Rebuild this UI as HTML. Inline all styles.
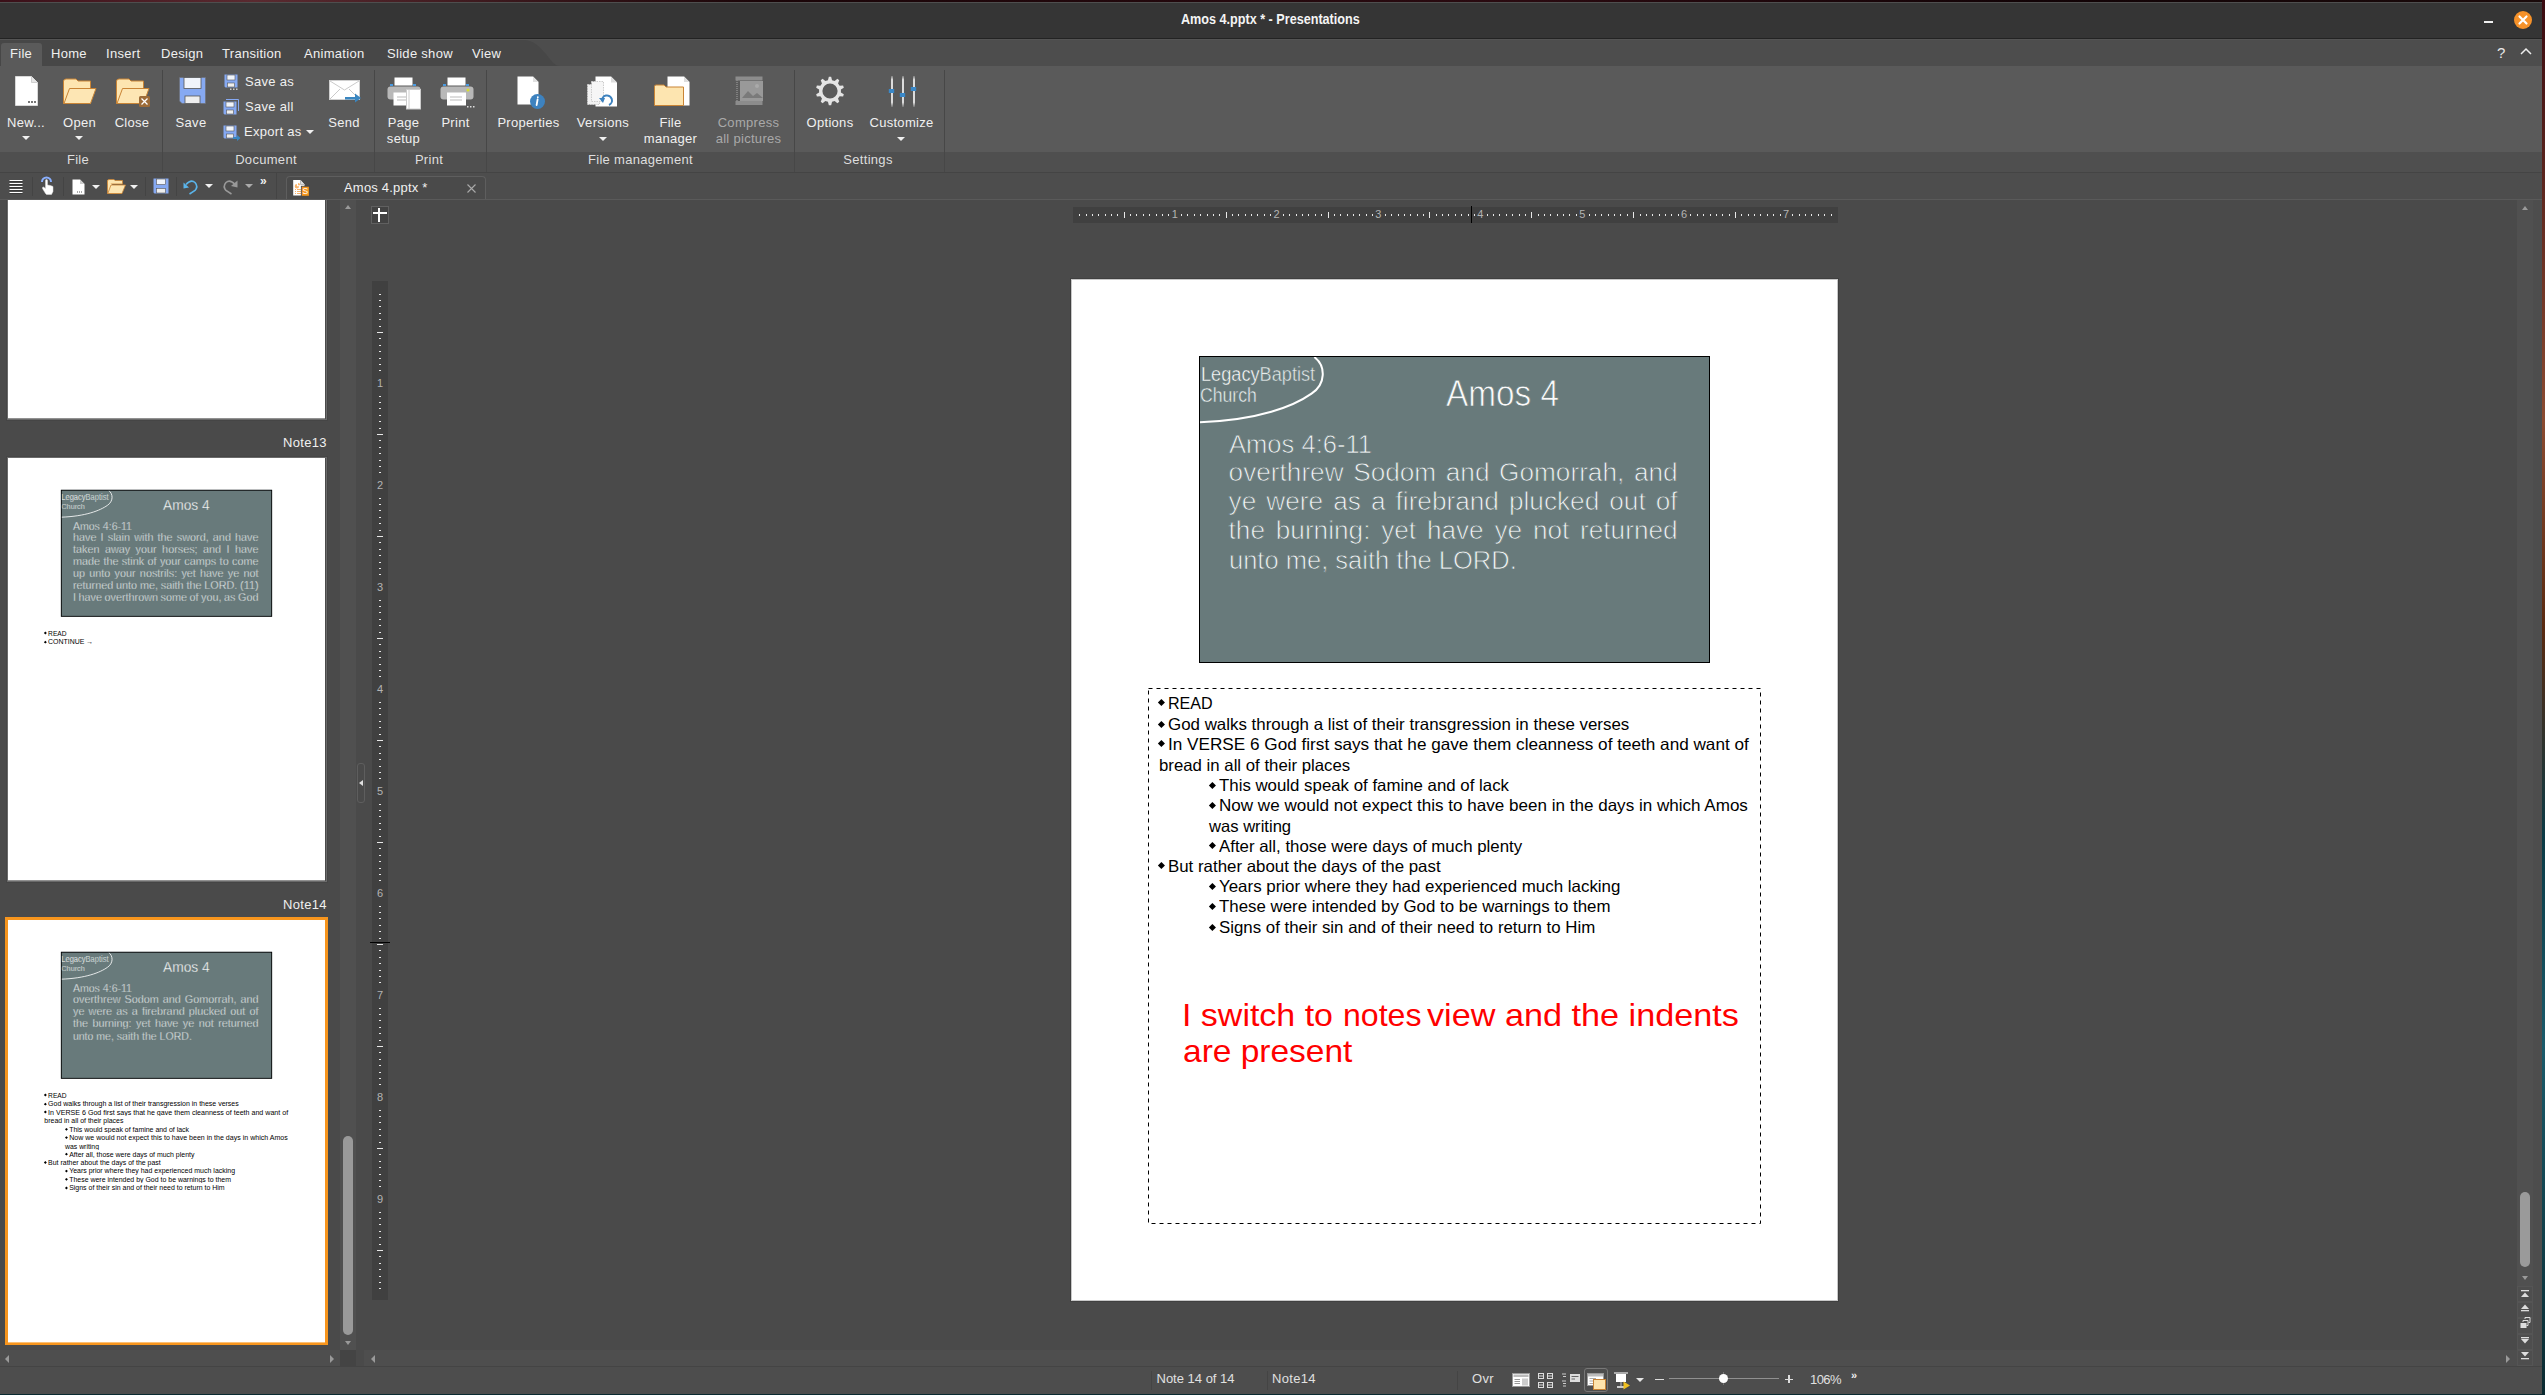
<!DOCTYPE html>
<html><head><meta charset="utf-8">
<style>
*{margin:0;padding:0;box-sizing:border-box}
html,body{width:2545px;height:1395px;overflow:hidden;background:#4a4a4a;font-family:"Liberation Sans",sans-serif;position:relative}
.a{position:absolute}
.t{position:absolute;white-space:nowrap;line-height:1}
.ui{color:#f0f0f0;font-size:13px;letter-spacing:0.3px}
.rl{color:#f0f0f0;font-size:13px;letter-spacing:0.3px;top:116px;width:100px;text-align:center}
.gl{color:#dedede;font-size:13px;letter-spacing:0.3px;top:153px;width:100px;text-align:center}
.sep{position:absolute;width:1px;background:#474747}
.dd{position:absolute;width:0;height:0;border-left:4px solid transparent;border-right:4px solid transparent;border-top:4px solid #f0f0f0}
svg{position:absolute;overflow:visible}
.sl .t{-webkit-text-stroke:0.75px #687a7b}
</style></head><body>

<!-- ===== TITLE BAR ===== -->
<div class="a" style="left:0;top:2px;width:2542px;height:1px;background:#4e4e4e"></div>
<div class="a" style="left:0;top:3px;width:2542px;height:35px;background:#353535"></div>
<div class="a" style="left:0;top:38px;width:2542px;height:1px;background:#232323"></div>
<div class="t" style="left:1181px;top:12px;font-size:14.5px;font-weight:bold;color:#f4f4f4;transform:scaleX(0.87);transform-origin:0 0">Amos 4.pptx * - Presentations</div>
<div class="a" style="left:2484px;top:21px;width:9px;height:2px;background:#f0f0f0"></div>
<div class="a" style="left:2514px;top:11px;width:18px;height:18px;border-radius:50%;background:#f6922a"></div>
<svg style="left:2514px;top:11px" width="18" height="18"><path d="M5.5 5.5L12.5 12.5M12.5 5.5L5.5 12.5" stroke="#fff" stroke-width="2.2" stroke-linecap="round"/></svg>

<!-- ===== MENU BAR ===== -->
<div class="a" style="left:0;top:39px;width:2542px;height:27px;background:#4d4d4d"></div>
<div class="a" style="left:0;top:39px;width:2542px;height:1px;background:#545454"></div>
<svg style="left:0;top:40px" width="600" height="26"><path d="M0 0 H522 C535 0 540 8 546 14 C552 22 555 26 560 26 H0 Z" fill="#474747"/></svg>
<div class="a" style="left:1px;top:43px;width:41px;height:23px;background:#5a5a5a;border-radius:3px 3px 0 0"></div>
<div class="t ui" style="left:10px;top:47px;font-size:13px">File</div>
<div class="t ui" style="left:51px;top:47px;font-size:13px">Home</div>
<div class="t ui" style="left:106px;top:47px;font-size:13px">Insert</div>
<div class="t ui" style="left:161px;top:47px;font-size:13px">Design</div>
<div class="t ui" style="left:222px;top:47px;font-size:13px">Transition</div>
<div class="t ui" style="left:304px;top:47px;font-size:13px">Animation</div>
<div class="t ui" style="left:387px;top:47px;font-size:13px">Slide show</div>
<div class="t ui" style="left:472px;top:47px;font-size:13px">View</div>
<div class="t ui" style="left:2497px;top:45px;font-size:15px;color:#e8e8e8">?</div>
<svg style="left:2519px;top:47px" width="14" height="10"><path d="M2 7L7 2L12 7" stroke="#eee" stroke-width="1.5" fill="none"/></svg>

<!-- ===== RIBBON ===== -->
<div class="a" style="left:0;top:66px;width:2542px;height:86px;background:#5a5a5a"></div>
<div class="a" style="left:0;top:152px;width:2542px;height:20px;background:#4f4f4f"></div>
<div class="a" style="left:0;top:172px;width:2542px;height:1px;background:#444"></div>
<div class="sep" style="left:162px;top:70px;height:102px"></div>
<div class="sep" style="left:374px;top:70px;height:102px"></div>
<div class="sep" style="left:486px;top:70px;height:102px"></div>
<div class="sep" style="left:794px;top:70px;height:102px"></div>
<div class="sep" style="left:944px;top:70px;height:102px"></div>
<!-- labels -->
<div class="t rl" style="left:-24px">New...</div>
<div class="t rl" style="left:29.5px">Open</div>
<div class="t rl" style="left:82px">Close</div>
<div class="t rl" style="left:141px">Save</div>
<div class="t rl" style="left:294px">Send</div>
<div class="t rl" style="left:353.5px">Page</div>
<div class="t rl" style="left:353.5px;top:131.5px">setup</div>
<div class="t rl" style="left:405.5px">Print</div>
<div class="t rl" style="left:478.5px">Properties</div>
<div class="t rl" style="left:553px">Versions</div>
<div class="t rl" style="left:620.5px">File</div>
<div class="t rl" style="left:620.5px;top:131.5px">manager</div>
<div class="t rl" style="left:698.5px;color:#a9a9a9">Compress</div>
<div class="t rl" style="left:698.5px;top:131.5px;color:#a9a9a9">all pictures</div>
<div class="t rl" style="left:780px">Options</div>
<div class="t rl" style="left:851.5px">Customize</div>
<div class="t ui" style="left:245px;top:75px">Save as</div>
<div class="t ui" style="left:245px;top:100px">Save all</div>
<div class="t ui" style="left:244px;top:125px">Export as</div>
<div class="dd" style="left:306px;top:130px"></div>
<div class="dd" style="left:22px;top:136px"></div>
<div class="dd" style="left:75px;top:136px"></div>
<div class="dd" style="left:599px;top:137px"></div>
<div class="dd" style="left:897px;top:137px"></div>
<!-- group labels -->
<div class="t gl" style="left:28px">File</div>
<div class="t gl" style="left:216px">Document</div>
<div class="t gl" style="left:379px">Print</div>
<div class="t gl" style="left:588px">File management</div>
<div class="t gl" style="left:818px">Settings</div>

<!-- New icon -->
<svg style="left:15px;top:76px" width="24" height="30"><path d="M0.5 0.5H16.5L22.5 6.5V29.5H0.5Z" fill="#fff" stroke="#d8d8d8"/><path d="M16.5 0.5V6.5H22.5" fill="#e6e6e6" stroke="#cfcfcf"/><rect x="13" y="25" width="2" height="2" fill="#777"/><rect x="16" y="25" width="2" height="2" fill="#777"/><rect x="19" y="25" width="2" height="2" fill="#777"/></svg>
<!-- Open folder -->
<svg style="left:63px;top:78px" width="34" height="27"><path d="M0.5 3.5Q0.5 1 3 1H13L15 3H27.5V9.5H0.5Z" fill="#fde5b0" stroke="#c98435"/><path d="M0.5 3V25.5H27.5V8" fill="#fde5b0" stroke="#c98435"/><path d="M6.5 10.5H33L27.5 25.5H1Z" fill="#fde6b4" stroke="#c98435"/></svg>
<!-- Close folder -->
<svg style="left:116px;top:78px" width="36" height="30"><path d="M0.5 3.5Q0.5 1 3 1H13L15 3H27.5V9.5H0.5Z" fill="#fde5b0" stroke="#c98435"/><path d="M0.5 3V25.5H27.5V8" fill="#fde5b0" stroke="#c98435"/><path d="M6.5 10.5H33L27.5 25.5H1Z" fill="#fde6b4" stroke="#c98435"/><rect x="23" y="18" width="11" height="11" rx="1.5" fill="#9c6b38"/><path d="M25.5 20.5L31.5 26.5M31.5 20.5L25.5 26.5" stroke="#fff" stroke-width="1.3"/></svg>
<!-- Save -->
<svg style="left:179px;top:77px" width="28" height="28"><path d="M0.5 0.5H26.5V26.5H3L0.5 24Z" fill="#86a9f2" stroke="#6f6f6f" stroke-width="0.6"/><rect x="5" y="0.5" width="17" height="11" fill="#f0f4fb" stroke="#555" stroke-width="0.8"/><rect x="6" y="19" width="15" height="7.5" fill="#eee" stroke="#555" stroke-width="0.8"/></svg>
<!-- Save as small -->
<svg style="left:224px;top:74px" width="16" height="17"><path d="M0.5 0.5H13.5V13.5H1.5L0.5 12.5Z" fill="#86a9f2"/><rect x="3" y="1" width="8" height="5" fill="#f0f4fb" stroke="#555" stroke-width="0.6"/><rect x="3.5" y="9" width="7" height="4" fill="#eee" stroke="#555" stroke-width="0.6"/><rect x="6" y="14.5" width="1.5" height="1.5" fill="#ccc"/><rect x="9" y="14.5" width="1.5" height="1.5" fill="#ccc"/><rect x="12" y="14.5" width="1.5" height="1.5" fill="#ccc"/></svg>
<!-- Save all small -->
<svg style="left:223px;top:99px" width="17" height="16"><path d="M3 0.5H15.5V12" fill="none" stroke="#86a9f2" stroke-width="1"/><path d="M0.5 2.5H13.5V15.5H1.5L0.5 14.5Z" fill="#86a9f2"/><rect x="3" y="3" width="8" height="5" fill="#f0f4fb" stroke="#555" stroke-width="0.6"/><rect x="3.5" y="11" width="7" height="4" fill="#eee" stroke="#555" stroke-width="0.6"/></svg>
<!-- Export small -->
<svg style="left:223px;top:125px" width="18" height="16"><path d="M0.5 0.5H13.5V13.5H1.5L0.5 12.5Z" fill="#86a9f2"/><rect x="3" y="1" width="8" height="5" fill="#f0f4fb" stroke="#555" stroke-width="0.6"/><rect x="3.5" y="9" width="7" height="4" fill="#eee" stroke="#555" stroke-width="0.6"/><path d="M10 12H14V10L17.5 13L14 16V14H10Z" fill="#3a86c0"/></svg>
<!-- Send -->
<svg style="left:329px;top:80px" width="33" height="26"><rect x="0.5" y="0.5" width="30" height="19" fill="#fff" stroke="#cfcfcf"/><path d="M1 1L15.5 10L30 1M1 19L11 9M30 19L20 9" stroke="#bdbdbd" fill="none" stroke-width="0.8"/><path d="M16 17H26V13.5L32 18L26 22.5V19.5H16Z" fill="#3a86c0"/></svg>
<!-- Page setup printer -->
<svg style="left:387px;top:77px" width="36" height="33"><rect x="7.5" y="0.5" width="18" height="8" fill="#fff"/><rect x="3" y="7" width="3" height="2" fill="#4a9ae0"/><rect x="26" y="7" width="3" height="2" fill="#4a9ae0"/><rect x="0.5" y="9.5" width="33" height="13" rx="3" fill="#b8b8b8"/><rect x="6.5" y="15.5" width="19" height="13" fill="#fff"/><path d="M10 20H20M10 23H20" stroke="#aaa" stroke-width="0.8"/><rect x="19.5" y="12.5" width="14" height="19.5" fill="#fff" stroke="#ccc"/><path d="M22 12.5V32" stroke="#ccc"/></svg>
<!-- Print printer -->
<svg style="left:440px;top:77px" width="36" height="33"><rect x="7.5" y="0.5" width="18" height="8" fill="#fff"/><rect x="3" y="7" width="3" height="2" fill="#4a9ae0"/><rect x="26" y="7" width="3" height="2" fill="#4a9ae0"/><rect x="0.5" y="9.5" width="33" height="13" rx="3" fill="#b8b8b8"/><circle cx="28" cy="13" r="1.5" fill="#d8e030"/><rect x="7" y="15.5" width="19" height="13" fill="#fff"/><path d="M10 20H22M10 23H22" stroke="#aaa" stroke-width="0.8"/><rect x="27" y="29" width="1.5" height="1.5" fill="#ddd"/><rect x="30" y="29" width="1.5" height="1.5" fill="#ddd"/><rect x="33" y="29" width="1.5" height="1.5" fill="#ddd"/></svg>
<!-- Properties -->
<svg style="left:517px;top:76px" width="30" height="34"><path d="M0.5 0.5H16L21.5 6V28.5H0.5Z" fill="#fff"/><path d="M16 0.5V6H21.5" fill="#e0e0e0"/><circle cx="20.5" cy="25.5" r="7.5" fill="#3d82bf"/><path d="M20.8 21.2v0.1M20.6 23.5L19.6 29" stroke="#fff" stroke-width="1.8" stroke-linecap="round"/></svg>
<!-- Versions -->
<svg style="left:587px;top:76px" width="32" height="32"><path d="M8.5 0.5H24L30 6.5V30.5H8.5Z" fill="#fff"/><path d="M24 0.5V6.5H30" fill="#ddd"/><rect x="0.5" y="8.5" width="12" height="20" fill="#f2f2f2" stroke="#ccc" stroke-dasharray="1.5 1"/><rect x="4.5" y="5.5" width="12" height="20" fill="#f6f6f6" stroke="#ccc" stroke-dasharray="1.5 1"/><path d="M15 25A5 5 0 1 1 22 29" stroke="#3d82bf" stroke-width="2" fill="none"/><path d="M12 22L16 27L18 22Z" fill="#3d82bf"/></svg>
<!-- File manager -->
<svg style="left:654px;top:76px" width="38" height="32"><path d="M13.5 0.5H30L35.5 6V29.5H13.5Z" fill="#fff"/><path d="M30 0.5V6H35.5" fill="#ddd"/><path d="M0.5 10.5Q0.5 9 2 9H10L12 11H29.5V29.5H0.5Z" fill="#fde5b0" stroke="#c98435"/></svg>
<!-- Compress -->
<svg style="left:735px;top:76px" width="30" height="30"><rect x="0.5" y="0.5" width="27" height="4" fill="#8c8c8c"/><rect x="0.5" y="25" width="27" height="4" fill="#8c8c8c"/><path d="M2 4V25" stroke="#8c8c8c" stroke-width="1.5" stroke-dasharray="1 1"/><rect x="5" y="5" width="23" height="20" fill="#999"/><path d="M7 22L13 15L18 20L22 17L28 22Z" fill="#7a7a7a"/><circle cx="22" cy="10" r="2" fill="#aaa"/></svg>
<!-- Options gear -->
<svg style="left:815px;top:76px" width="31" height="31"><path d="M12.94,4.19 L13.84,0.85 L16.16,0.85 L17.06,4.19 L19.68,5.05 L22.38,2.87 L24.26,4.23 L23.02,7.47 L24.64,9.70 L28.10,9.52 L28.82,11.73 L25.91,13.62 L25.91,16.38 L28.82,18.27 L28.10,20.48 L24.64,20.30 L23.02,22.53 L24.26,25.77 L22.38,27.13 L19.68,24.95 L17.06,25.81 L16.16,29.15 L13.84,29.15 L12.94,25.81 L10.32,24.95 L7.62,27.13 L5.74,25.77 L6.98,22.53 L5.36,20.30 L1.90,20.48 L1.18,18.27 L4.09,16.38 L4.09,13.62 L1.18,11.73 L1.90,9.52 L5.36,9.70 L6.98,7.47 L5.74,4.23 L7.62,2.87 L10.32,5.05 Z M22.6,15 A7.6 7.6 0 1 0 7.4,15 A7.6 7.6 0 1 0 22.6,15 Z" fill="#e4e4e4" fill-rule="evenodd"/></svg>
<!-- Customize sliders -->
<svg style="left:888px;top:76px" width="30" height="32"><defs><linearGradient id="sg" x1="0" y1="0" x2="0" y2="1"><stop offset="0" stop-color="#cfcfcf" stop-opacity="0.3"/><stop offset="0.12" stop-color="#dcdcdc"/><stop offset="0.85" stop-color="#dcdcdc"/><stop offset="1" stop-color="#cfcfcf" stop-opacity="0.2"/></linearGradient></defs><rect x="3" y="0" width="2" height="31" fill="url(#sg)"/><rect x="14" y="0" width="2" height="31" fill="url(#sg)"/><rect x="25" y="0" width="2" height="31" fill="url(#sg)"/><rect x="0.8" y="13" width="5.4" height="4" fill="#3a88c8"/><rect x="11.8" y="17" width="5.4" height="4" fill="#3a88c8"/><rect x="22.8" y="11" width="5.4" height="4" fill="#3a88c8"/></svg>


<!-- ===== TOOLBAR ROW ===== -->
<div class="a" style="left:0;top:173px;width:2542px;height:27px;background:#4d4d4d"></div>
<svg style="left:9px;top:180px" width="14" height="15"><rect x="0.5" y="0" width="13" height="1" fill="#fff"/><rect x="0.5" y="1" width="13" height="1" fill="#3a3a3a"/><rect x="0.5" y="3" width="13" height="1" fill="#fff"/><rect x="0.5" y="4" width="13" height="1" fill="#3a3a3a"/><rect x="0.5" y="6" width="13" height="1" fill="#fff"/><rect x="0.5" y="7" width="13" height="1" fill="#3a3a3a"/><rect x="0.5" y="9" width="13" height="1" fill="#fff"/><rect x="0.5" y="10" width="13" height="1" fill="#3a3a3a"/><rect x="0.5" y="12" width="13" height="1" fill="#fff"/><rect x="0.5" y="13" width="13" height="1" fill="#3a3a3a"/></svg>
<div class="sep" style="left:32px;top:177px;height:19px;background:#444"></div>
<svg style="left:40px;top:176px" width="16" height="20"><path d="M2 6A4.5 4.5 0 0 1 11 6" stroke="#8ab0ff" stroke-width="2" fill="none"/><path d="M5.5 17.5L2.5 12.5Q2 11 3.5 11L5.5 12.5V4.5Q5.5 3.5 6.5 3.5Q7.5 3.5 7.5 4.5V9L10.5 9.5L13 10.5V15.5L11.5 18.5H6.5Z" fill="#fff" stroke="#ddd" stroke-width="0.5"/></svg>
<div class="sep" style="left:63px;top:177px;height:19px;background:#444"></div>
<svg style="left:72px;top:179px" width="13" height="16"><path d="M0.5 0.5H8L12.5 5V15.5H0.5Z" fill="#fff"/><path d="M8 0.5V5H12.5" fill="#ccc"/><rect x="5" y="12.5" width="1" height="1" fill="#555"/><rect x="7" y="12.5" width="1" height="1" fill="#555"/><rect x="9" y="12.5" width="1" height="1" fill="#555"/></svg>
<div class="dd" style="left:92px;top:185px"></div>
<svg style="left:107px;top:179px" width="19" height="15"><path d="M0.5 2Q0.5 0.5 2 0.5H7L8 1.5H15.5V5H0.5Z" fill="#fde5b0" stroke="#c98435" stroke-width="0.8"/><path d="M0.5 1.5V14.5H15" fill="#fde5b0" stroke="#c98435" stroke-width="0.8"/><path d="M4 6H18.5L15 14.5H0.8Z" fill="#fde6b4" stroke="#c98435" stroke-width="0.8"/></svg>
<div class="dd" style="left:130px;top:185px"></div>
<div class="sep" style="left:145px;top:177px;height:19px;background:#444"></div>
<svg style="left:153px;top:178px" width="16" height="16"><path d="M0.5 0.5H15.5V15.5H1.5L0.5 14.5Z" fill="#86a9f2"/><rect x="3.5" y="1" width="9" height="5.5" fill="#f0f4fb" stroke="#555" stroke-width="0.6"/><rect x="3.5" y="10.5" width="9" height="4.5" fill="#eee" stroke="#555" stroke-width="0.6"/></svg>
<div class="sep" style="left:176px;top:177px;height:19px;background:#444"></div>
<svg style="left:183px;top:179px" width="16" height="16"><path d="M3 5.5Q8 0 12 3.5Q15.5 7.5 12 11.5L6.5 15" stroke="#5ab4ea" stroke-width="1.6" fill="none"/><path d="M0.5 3.5L0.5 9.5L6 8.5Z" fill="#5ab4ea"/></svg>
<div class="dd" style="left:205px;top:184px"></div>
<svg style="left:222px;top:179px" width="16" height="16"><path d="M13 5.5Q8 0 4 3.5Q0.5 7.5 4 11.5L9.5 15" stroke="#999" stroke-width="1.6" fill="none"/><path d="M15.5 1.5L15.5 8.5L9 7Z" fill="#999"/></svg>
<div class="dd" style="left:245px;top:184px;border-top-color:#aaa"></div>
<div class="t" style="left:260px;top:175px;font-size:12px;color:#f0f0f0;font-weight:bold">&raquo;</div>
<div class="sep" style="left:276px;top:173px;height:27px;background:#444"></div>
<!-- doc tab -->
<div class="a" style="left:286px;top:176px;width:200px;height:24px;border:1px solid #5e5e5e;border-bottom:none;border-radius:4px 4px 0 0;background:#4a4a4a"></div>
<svg style="left:288px;top:176px" width="24" height="24"><path d="M5.2 4.1H12.5L16.5 8.5V19.4H5.2Z" fill="#fff"/><path d="M12.5 4.1V8.5H16.5" fill="#ddd" stroke="#9a9a9a" stroke-width="0.6"/><path d="M8.9 8A2.2 2.2 0 1 0 11.1 10.2H8.9Z" fill="#f9b36a"/><path d="M10 7V9.2H12.2A2.2 2.2 0 0 0 10 7Z" fill="#f9b36a"/><g fill="#f9b36a"><rect x="7" y="13" width="1" height="1"/><rect x="7" y="15" width="1" height="1"/><rect x="7" y="17" width="1" height="1"/><rect x="9" y="13" width="4" height="1"/><rect x="9" y="15" width="4" height="1"/><rect x="9" y="17" width="4" height="1"/></g><rect x="13.3" y="10.2" width="8" height="10" fill="#f7961c" stroke="#3b4049" stroke-width="0.8"/><text x="17.3" y="18.3" font-size="8.5" fill="#fff" font-family="Liberation Sans" text-anchor="middle">S</text></svg>
<div class="t ui" style="left:344px;top:181px;font-size:13px;letter-spacing:0.2px">Amos 4.pptx *</div>
<svg style="left:467px;top:184px" width="9" height="9"><path d="M0.5 0.5L8.5 8.5M8.5 0.5L0.5 8.5" stroke="#aaa" stroke-width="1.1"/></svg>


<!-- ===== LEFT PANEL ===== -->
<div class="a" style="left:0;top:200px;width:340px;height:1150px;background:#4a4a4a;overflow:hidden" id="lp">
<div class="a" style="left:8px;top:-204px;width:317.5px;height:422.5px;box-shadow:0 0 0 1px #6a6a6a, 0 0 0 2px #454545"></div>
<div class="a" style="left:8px;top:-204px;width:767px;height:1022px;background:#fff;transform:scale(0.41330);transform-origin:0 0;overflow:hidden">
</div>
<div class="t" style="left:283.00px;top:235.95px;font-size:13px;color:#f0f0f0;font-weight:normal;letter-spacing:0.3px;">Note13</div>
<div class="a" style="left:8px;top:258px;width:317.5px;height:422.5px;box-shadow:0 0 0 1px #6a6a6a, 0 0 0 2px #454545"></div>
<div class="a" style="left:8px;top:258px;width:767px;height:1022px;background:#fff;transform:scale(0.41330);transform-origin:0 0;overflow:hidden">
<div class="a sl" style="left:128px;top:77px;width:511px;height:307px;background:#687a7b;border:2.4px solid #000;overflow:hidden">
<svg style="left:-2.4px;top:-2.4px" width="200" height="80"><path d="M115.3 1 C 127 10, 127 28, 112.5 37.6 C 95 50, 60 64, 1 66.2" stroke="#fff" stroke-width="2" fill="none"/></svg>
<div class="t" style="left:-0.90px;top:5.60px;font-size:20px;color:#000;font-weight:normal;transform:scaleX(0.9080);transform-origin:0 0;-webkit-text-stroke:0.45px #687a7b;"><span style="color:#ffffff">Legacy</span><span style="color:#e6ecec">Baptist</span></div>
<div class="t" style="left:-1.20px;top:27.64px;font-size:19.6px;color:#eef2f2;font-weight:normal;transform:scaleX(0.9000);transform-origin:0 0;-webkit-text-stroke:0.45px #687a7b;">Church</div>
<div class="t" style="left:244.60px;top:17.83px;font-size:36.2px;color:#fafafa;font-weight:normal;transform:scaleX(0.9210);transform-origin:0 0;">Amos 4</div>
<div class="t" style="left:27.30px;top:72.23px;font-size:26.2px;color:#f0f3f3;font-weight:normal;transform:scaleX(0.9760);transform-origin:0 0;">Amos 4:6-11</div>
<div class="t" style="left:27.20px;top:100.73px;width:449.00px;font-size:26.2px;color:#f0f3f3;display:flex;justify-content:space-between;"><span>have</span><span>I</span><span>slain</span><span>with</span><span>the</span><span>sword,</span><span>and</span><span>have</span></div>
<div class="t" style="left:27.20px;top:129.86px;width:449.00px;font-size:26.2px;color:#f0f3f3;display:flex;justify-content:space-between;"><span>taken</span><span>away</span><span>your</span><span>horses;</span><span>and</span><span>I</span><span>have</span></div>
<div class="t" style="left:27.20px;top:158.99px;width:449.00px;font-size:26.2px;color:#f0f3f3;display:flex;justify-content:space-between;"><span>made</span><span>the</span><span>stink</span><span>of</span><span>your</span><span>camps</span><span>to</span><span>come</span></div>
<div class="t" style="left:27.20px;top:188.12px;width:449.00px;font-size:26.2px;color:#f0f3f3;display:flex;justify-content:space-between;"><span>up</span><span>unto</span><span>your</span><span>nostrils:</span><span>yet</span><span>have</span><span>ye</span><span>not</span></div>
<div class="t" style="left:27.20px;top:217.25px;width:449.00px;font-size:26.2px;color:#f0f3f3;display:flex;justify-content:space-between;"><span>returned</span><span>unto</span><span>me,</span><span>saith</span><span>the</span><span>LORD.</span><span>(11)</span></div>
<div class="t" style="left:27.20px;top:246.38px;width:449.00px;font-size:26.2px;color:#f0f3f3;display:flex;justify-content:space-between;"><span>I</span><span>have</span><span>overthrown</span><span>some</span><span>of</span><span>you,</span><span>as</span><span>God</span></div>
</div>
<div class="a" style="left:87.60px;top:421.40px;width:4.8px;height:4.8px;background:#000;transform:rotate(45deg)"></div>
<div class="t" style="left:96.60px;top:415.68px;font-size:16.5px;color:#000;font-weight:normal;transform:scaleX(0.9750);transform-origin:0 0;">READ</div>
<div class="a" style="left:87.60px;top:442.50px;width:4.8px;height:4.8px;background:#000;transform:rotate(45deg)"></div>
<div class="t" style="left:96.60px;top:436.78px;font-size:16.5px;color:#000;font-weight:normal;transform:scaleX(1.0200);transform-origin:0 0;">CONTINUE &rarr;</div>
</div>
<div class="t" style="left:283.00px;top:697.95px;font-size:13px;color:#f0f0f0;font-weight:normal;letter-spacing:0.3px;">Note14</div>
<div class="a" style="left:5px;top:717px;width:323px;height:428px;background:#f7951d"></div>
<div class="a" style="left:8px;top:720px;width:767px;height:1022px;background:#fff;transform:scale(0.41330);transform-origin:0 0;overflow:hidden">
<div class="a sl" style="left:128px;top:77px;width:511px;height:307px;background:#687a7b;border:2.4px solid #000;overflow:hidden">
<svg style="left:-2.4px;top:-2.4px" width="200" height="80"><path d="M115.3 1 C 127 10, 127 28, 112.5 37.6 C 95 50, 60 64, 1 66.2" stroke="#fff" stroke-width="2" fill="none"/></svg>
<div class="t" style="left:-0.90px;top:5.60px;font-size:20px;color:#000;font-weight:normal;transform:scaleX(0.9080);transform-origin:0 0;-webkit-text-stroke:0.45px #687a7b;"><span style="color:#ffffff">Legacy</span><span style="color:#e6ecec">Baptist</span></div>
<div class="t" style="left:-1.20px;top:27.64px;font-size:19.6px;color:#eef2f2;font-weight:normal;transform:scaleX(0.9000);transform-origin:0 0;-webkit-text-stroke:0.45px #687a7b;">Church</div>
<div class="t" style="left:244.60px;top:17.83px;font-size:36.2px;color:#fafafa;font-weight:normal;transform:scaleX(0.9210);transform-origin:0 0;">Amos 4</div>
<div class="t" style="left:27.30px;top:72.23px;font-size:26.2px;color:#f0f3f3;font-weight:normal;transform:scaleX(0.9760);transform-origin:0 0;">Amos 4:6-11</div>
<div class="t" style="left:27.20px;top:100.73px;width:449.00px;font-size:26.2px;color:#f0f3f3;display:flex;justify-content:space-between;"><span>overthrew</span><span>Sodom</span><span>and</span><span>Gomorrah,</span><span>and</span></div>
<div class="t" style="left:27.20px;top:129.86px;width:449.00px;font-size:26.2px;color:#f0f3f3;display:flex;justify-content:space-between;"><span>ye</span><span>were</span><span>as</span><span>a</span><span>firebrand</span><span>plucked</span><span>out</span><span>of</span></div>
<div class="t" style="left:27.20px;top:158.99px;width:449.00px;font-size:26.2px;color:#f0f3f3;display:flex;justify-content:space-between;"><span>the</span><span>burning:</span><span>yet</span><span>have</span><span>ye</span><span>not</span><span>returned</span></div>
<div class="t" style="left:27.20px;top:188.62px;font-size:26.2px;color:#f0f3f3;font-weight:normal;transform:scaleX(0.9740);transform-origin:0 0;">unto me, saith the LORD.</div>
</div>
<div class="a" style="left:87.60px;top:421.40px;width:4.8px;height:4.8px;background:#000;transform:rotate(45deg)"></div>
<div class="t" style="left:96.60px;top:415.68px;font-size:16.5px;color:#000;font-weight:normal;transform:scaleX(0.9752);transform-origin:0 0;">READ</div>
<div class="a" style="left:87.60px;top:442.50px;width:4.8px;height:4.8px;background:#000;transform:rotate(45deg)"></div>
<div class="t" style="left:96.60px;top:436.78px;font-size:16.5px;color:#000;font-weight:normal;transform:scaleX(1.0244);transform-origin:0 0;">God walks through a list of their transgression in these verses</div>
<div class="a" style="left:87.60px;top:462.40px;width:4.8px;height:4.8px;background:#000;transform:rotate(45deg)"></div>
<div class="t" style="left:96.60px;top:456.68px;font-size:16.5px;color:#000;font-weight:normal;transform:scaleX(1.0398);transform-origin:0 0;">In VERSE 6 God first says that he gave them cleanness of teeth and want of</div>
<div class="t" style="left:87.70px;top:477.68px;font-size:16.5px;color:#000;font-weight:normal;transform:scaleX(1.0169);transform-origin:0 0;">bread in all of their places</div>
<div class="a" style="left:138.70px;top:503.60px;width:4.8px;height:4.8px;background:#000;transform:rotate(45deg)"></div>
<div class="t" style="left:147.80px;top:497.88px;font-size:16.5px;color:#000;font-weight:normal;transform:scaleX(1.0200);transform-origin:0 0;">This would speak of famine and of lack</div>
<div class="a" style="left:138.70px;top:523.50px;width:4.8px;height:4.8px;background:#000;transform:rotate(45deg)"></div>
<div class="t" style="left:147.80px;top:517.77px;font-size:16.5px;color:#000;font-weight:normal;transform:scaleX(1.0334);transform-origin:0 0;">Now we would not expect this to have been in the days in which Amos</div>
<div class="t" style="left:138.40px;top:538.58px;font-size:16.5px;color:#000;font-weight:normal;transform:scaleX(1.0060);transform-origin:0 0;">was writing</div>
<div class="a" style="left:138.70px;top:564.30px;width:4.8px;height:4.8px;background:#000;transform:rotate(45deg)"></div>
<div class="t" style="left:147.80px;top:558.58px;font-size:16.5px;color:#000;font-weight:normal;transform:scaleX(1.0200);transform-origin:0 0;">After all, those were days of much plenty</div>
<div class="a" style="left:87.60px;top:584.40px;width:4.8px;height:4.8px;background:#000;transform:rotate(45deg)"></div>
<div class="t" style="left:96.60px;top:578.68px;font-size:16.5px;color:#000;font-weight:normal;transform:scaleX(1.0212);transform-origin:0 0;">But rather about the days of the past</div>
<div class="a" style="left:138.70px;top:605.10px;width:4.8px;height:4.8px;background:#000;transform:rotate(45deg)"></div>
<div class="t" style="left:147.80px;top:599.38px;font-size:16.5px;color:#000;font-weight:normal;transform:scaleX(1.0241);transform-origin:0 0;">Years prior where they had experienced much lacking</div>
<div class="a" style="left:138.70px;top:625.20px;width:4.8px;height:4.8px;background:#000;transform:rotate(45deg)"></div>
<div class="t" style="left:147.80px;top:619.48px;font-size:16.5px;color:#000;font-weight:normal;transform:scaleX(1.0211);transform-origin:0 0;">These were intended by God to be warnings to them</div>
<div class="a" style="left:138.70px;top:645.80px;width:4.8px;height:4.8px;background:#000;transform:rotate(45deg)"></div>
<div class="t" style="left:147.80px;top:640.08px;font-size:16.5px;color:#000;font-weight:normal;transform:scaleX(1.0203);transform-origin:0 0;">Signs of their sin and of their need to return to Him</div>
</div>

</div>
<div class="a" style="left:340px;top:200px;width:16px;height:1150px;background:#505050"></div>
<div class="a" style="left:343px;top:1136px;width:10px;height:199px;background:#9a9a9a;border-radius:5px"></div>

<!-- ===== MAIN AREA ===== -->
<div class="a" style="left:356px;top:200px;width:2186px;height:1150px;background:#4a4a4a"></div>
<div class="a" style="left:2517px;top:200px;width:16px;height:1086px;background:#505050"></div>
<div class="a" style="left:2520px;top:1192px;width:10px;height:75px;background:#9a9a9a;border-radius:5px"></div>
<div class="a" style="left:1071px;top:279px;width:767px;height:1022px;background:#fff;box-shadow:inset 0 0 0 1px #c8c8c8, 0 0 0 1px #404040">
<div class="a sl" style="left:128px;top:77px;width:511px;height:307px;background:#687a7b;border:1px solid #000;overflow:hidden">
<svg style="left:-1px;top:-1px" width="200" height="80"><path d="M115.3 1 C 127 10, 127 28, 112.5 37.6 C 95 50, 60 64, 1 66.2" stroke="#fff" stroke-width="2" fill="none"/></svg>
<div class="t" style="left:0.50px;top:7.00px;font-size:20px;color:#000;font-weight:normal;transform:scaleX(0.9080);transform-origin:0 0;-webkit-text-stroke:0.45px #687a7b;"><span style="color:#ffffff">Legacy</span><span style="color:#e6ecec">Baptist</span></div>
<div class="t" style="left:0.20px;top:29.04px;font-size:19.6px;color:#eef2f2;font-weight:normal;transform:scaleX(0.9000);transform-origin:0 0;-webkit-text-stroke:0.45px #687a7b;">Church</div>
<div class="t" style="left:246.00px;top:19.23px;font-size:36.2px;color:#fafafa;font-weight:normal;transform:scaleX(0.9210);transform-origin:0 0;">Amos 4</div>
<div class="t" style="left:28.70px;top:73.63px;font-size:26.2px;color:#f0f3f3;font-weight:normal;transform:scaleX(0.9760);transform-origin:0 0;">Amos 4:6-11</div>
<div class="t" style="left:28.60px;top:102.13px;width:449.00px;font-size:26.2px;color:#f0f3f3;display:flex;justify-content:space-between;"><span>overthrew</span><span>Sodom</span><span>and</span><span>Gomorrah,</span><span>and</span></div>
<div class="t" style="left:28.60px;top:131.26px;width:449.00px;font-size:26.2px;color:#f0f3f3;display:flex;justify-content:space-between;"><span>ye</span><span>were</span><span>as</span><span>a</span><span>firebrand</span><span>plucked</span><span>out</span><span>of</span></div>
<div class="t" style="left:28.60px;top:160.39px;width:449.00px;font-size:26.2px;color:#f0f3f3;display:flex;justify-content:space-between;"><span>the</span><span>burning:</span><span>yet</span><span>have</span><span>ye</span><span>not</span><span>returned</span></div>
<div class="t" style="left:28.60px;top:190.02px;font-size:26.2px;color:#f0f3f3;font-weight:normal;transform:scaleX(0.9740);transform-origin:0 0;">unto me, saith the LORD.</div>
</div>
<div class="a" style="left:87.60px;top:421.40px;width:4.8px;height:4.8px;background:#000;transform:rotate(45deg)"></div>
<div class="t" style="left:96.60px;top:415.68px;font-size:16.5px;color:#000;font-weight:normal;transform:scaleX(0.9752);transform-origin:0 0;">READ</div>
<div class="a" style="left:87.60px;top:442.50px;width:4.8px;height:4.8px;background:#000;transform:rotate(45deg)"></div>
<div class="t" style="left:96.60px;top:436.78px;font-size:16.5px;color:#000;font-weight:normal;transform:scaleX(1.0244);transform-origin:0 0;">God walks through a list of their transgression in these verses</div>
<div class="a" style="left:87.60px;top:462.40px;width:4.8px;height:4.8px;background:#000;transform:rotate(45deg)"></div>
<div class="t" style="left:96.60px;top:456.68px;font-size:16.5px;color:#000;font-weight:normal;transform:scaleX(1.0398);transform-origin:0 0;">In VERSE 6 God first says that he gave them cleanness of teeth and want of</div>
<div class="t" style="left:87.70px;top:477.68px;font-size:16.5px;color:#000;font-weight:normal;transform:scaleX(1.0169);transform-origin:0 0;">bread in all of their places</div>
<div class="a" style="left:138.70px;top:503.60px;width:4.8px;height:4.8px;background:#000;transform:rotate(45deg)"></div>
<div class="t" style="left:147.80px;top:497.88px;font-size:16.5px;color:#000;font-weight:normal;transform:scaleX(1.0200);transform-origin:0 0;">This would speak of famine and of lack</div>
<div class="a" style="left:138.70px;top:523.50px;width:4.8px;height:4.8px;background:#000;transform:rotate(45deg)"></div>
<div class="t" style="left:147.80px;top:517.77px;font-size:16.5px;color:#000;font-weight:normal;transform:scaleX(1.0334);transform-origin:0 0;">Now we would not expect this to have been in the days in which Amos</div>
<div class="t" style="left:138.40px;top:538.58px;font-size:16.5px;color:#000;font-weight:normal;transform:scaleX(1.0060);transform-origin:0 0;">was writing</div>
<div class="a" style="left:138.70px;top:564.30px;width:4.8px;height:4.8px;background:#000;transform:rotate(45deg)"></div>
<div class="t" style="left:147.80px;top:558.58px;font-size:16.5px;color:#000;font-weight:normal;transform:scaleX(1.0200);transform-origin:0 0;">After all, those were days of much plenty</div>
<div class="a" style="left:87.60px;top:584.40px;width:4.8px;height:4.8px;background:#000;transform:rotate(45deg)"></div>
<div class="t" style="left:96.60px;top:578.68px;font-size:16.5px;color:#000;font-weight:normal;transform:scaleX(1.0212);transform-origin:0 0;">But rather about the days of the past</div>
<div class="a" style="left:138.70px;top:605.10px;width:4.8px;height:4.8px;background:#000;transform:rotate(45deg)"></div>
<div class="t" style="left:147.80px;top:599.38px;font-size:16.5px;color:#000;font-weight:normal;transform:scaleX(1.0241);transform-origin:0 0;">Years prior where they had experienced much lacking</div>
<div class="a" style="left:138.70px;top:625.20px;width:4.8px;height:4.8px;background:#000;transform:rotate(45deg)"></div>
<div class="t" style="left:147.80px;top:619.48px;font-size:16.5px;color:#000;font-weight:normal;transform:scaleX(1.0211);transform-origin:0 0;">These were intended by God to be warnings to them</div>
<div class="a" style="left:138.70px;top:645.80px;width:4.8px;height:4.8px;background:#000;transform:rotate(45deg)"></div>
<div class="t" style="left:147.80px;top:640.08px;font-size:16.5px;color:#000;font-weight:normal;transform:scaleX(1.0203);transform-origin:0 0;">Signs of their sin and of their need to return to Him</div>
<svg style="left:77px;top:409px" width="613" height="536"><rect x="0.5" y="0.5" width="612" height="535" fill="none" stroke="#000" stroke-width="1" stroke-dasharray="4 4"/></svg>
<div class="t" style="left:110.60px;top:720.94px;font-size:31.6px;color:#ff0000;font-weight:normal;transform:scaleX(1.0750);transform-origin:0 0;">I switch to</div>
<div class="t" style="left:272.30px;top:720.94px;font-size:31.6px;color:#ff0000;font-weight:normal;transform:scaleX(1.0150);transform-origin:0 0;">notes</div>
<div class="t" style="left:356.00px;top:720.94px;font-size:31.6px;color:#ff0000;font-weight:normal;transform:scaleX(1.0830);transform-origin:0 0;">view and the indents</div>
<div class="t" style="left:112.00px;top:756.94px;font-size:31.6px;color:#ff0000;font-weight:normal;transform:scaleX(1.0600);transform-origin:0 0;">are present</div>
</div>


<div class="a" style="left:0;top:199px;width:2542px;height:1px;background:#5a5a5a"></div>
<div class="a" style="left:1073px;top:207px;width:765px;height:16px;background:#404040"></div>
<div class="t" style="left:1164.7px;top:209px;width:20px;text-align:center;font-size:11px;color:#b4b4b4">1</div>
<div class="t" style="left:1266.6px;top:209px;width:20px;text-align:center;font-size:11px;color:#b4b4b4">2</div>
<div class="t" style="left:1368.4px;top:209px;width:20px;text-align:center;font-size:11px;color:#b4b4b4">3</div>
<div class="t" style="left:1470.3px;top:209px;width:20px;text-align:center;font-size:11px;color:#b4b4b4">4</div>
<div class="t" style="left:1572.2px;top:209px;width:20px;text-align:center;font-size:11px;color:#b4b4b4">5</div>
<div class="t" style="left:1674.1px;top:209px;width:20px;text-align:center;font-size:11px;color:#b4b4b4">6</div>
<div class="t" style="left:1776.0px;top:209px;width:20px;text-align:center;font-size:11px;color:#b4b4b4">7</div>
<svg style="left:1073px;top:207px" width="765" height="16"><rect x="6" y="7" width="1" height="2" fill="#e8e8e8"/><rect x="13" y="7" width="1" height="2" fill="#e8e8e8"/><rect x="19" y="7" width="1" height="2" fill="#e8e8e8"/><rect x="25" y="7" width="1" height="2" fill="#e8e8e8"/><rect x="32" y="7" width="1" height="2" fill="#e8e8e8"/><rect x="38" y="7" width="1" height="2" fill="#e8e8e8"/><rect x="44" y="7" width="1" height="2" fill="#e8e8e8"/><rect x="51" y="5" width="1" height="6" fill="#e8e8e8"/><rect x="57" y="7" width="1" height="2" fill="#e8e8e8"/><rect x="63" y="7" width="1" height="2" fill="#e8e8e8"/><rect x="70" y="7" width="1" height="2" fill="#e8e8e8"/><rect x="76" y="7" width="1" height="2" fill="#e8e8e8"/><rect x="83" y="7" width="1" height="2" fill="#e8e8e8"/><rect x="89" y="7" width="1" height="2" fill="#e8e8e8"/><rect x="95" y="7" width="1" height="2" fill="#e8e8e8"/><rect x="108" y="7" width="1" height="2" fill="#e8e8e8"/><rect x="114" y="7" width="1" height="2" fill="#e8e8e8"/><rect x="121" y="7" width="1" height="2" fill="#e8e8e8"/><rect x="127" y="7" width="1" height="2" fill="#e8e8e8"/><rect x="134" y="7" width="1" height="2" fill="#e8e8e8"/><rect x="140" y="7" width="1" height="2" fill="#e8e8e8"/><rect x="146" y="7" width="1" height="2" fill="#e8e8e8"/><rect x="153" y="5" width="1" height="6" fill="#e8e8e8"/><rect x="159" y="7" width="1" height="2" fill="#e8e8e8"/><rect x="165" y="7" width="1" height="2" fill="#e8e8e8"/><rect x="172" y="7" width="1" height="2" fill="#e8e8e8"/><rect x="178" y="7" width="1" height="2" fill="#e8e8e8"/><rect x="184" y="7" width="1" height="2" fill="#e8e8e8"/><rect x="191" y="7" width="1" height="2" fill="#e8e8e8"/><rect x="197" y="7" width="1" height="2" fill="#e8e8e8"/><rect x="210" y="7" width="1" height="2" fill="#e8e8e8"/><rect x="216" y="7" width="1" height="2" fill="#e8e8e8"/><rect x="223" y="7" width="1" height="2" fill="#e8e8e8"/><rect x="229" y="7" width="1" height="2" fill="#e8e8e8"/><rect x="235" y="7" width="1" height="2" fill="#e8e8e8"/><rect x="242" y="7" width="1" height="2" fill="#e8e8e8"/><rect x="248" y="7" width="1" height="2" fill="#e8e8e8"/><rect x="255" y="5" width="1" height="6" fill="#e8e8e8"/><rect x="261" y="7" width="1" height="2" fill="#e8e8e8"/><rect x="267" y="7" width="1" height="2" fill="#e8e8e8"/><rect x="274" y="7" width="1" height="2" fill="#e8e8e8"/><rect x="280" y="7" width="1" height="2" fill="#e8e8e8"/><rect x="286" y="7" width="1" height="2" fill="#e8e8e8"/><rect x="293" y="7" width="1" height="2" fill="#e8e8e8"/><rect x="299" y="7" width="1" height="2" fill="#e8e8e8"/><rect x="312" y="7" width="1" height="2" fill="#e8e8e8"/><rect x="318" y="7" width="1" height="2" fill="#e8e8e8"/><rect x="325" y="7" width="1" height="2" fill="#e8e8e8"/><rect x="331" y="7" width="1" height="2" fill="#e8e8e8"/><rect x="337" y="7" width="1" height="2" fill="#e8e8e8"/><rect x="344" y="7" width="1" height="2" fill="#e8e8e8"/><rect x="350" y="7" width="1" height="2" fill="#e8e8e8"/><rect x="356" y="5" width="1" height="6" fill="#e8e8e8"/><rect x="363" y="7" width="1" height="2" fill="#e8e8e8"/><rect x="369" y="7" width="1" height="2" fill="#e8e8e8"/><rect x="375" y="7" width="1" height="2" fill="#e8e8e8"/><rect x="382" y="7" width="1" height="2" fill="#e8e8e8"/><rect x="388" y="7" width="1" height="2" fill="#e8e8e8"/><rect x="395" y="7" width="1" height="2" fill="#e8e8e8"/><rect x="401" y="7" width="1" height="2" fill="#e8e8e8"/><rect x="414" y="7" width="1" height="2" fill="#e8e8e8"/><rect x="420" y="7" width="1" height="2" fill="#e8e8e8"/><rect x="426" y="7" width="1" height="2" fill="#e8e8e8"/><rect x="433" y="7" width="1" height="2" fill="#e8e8e8"/><rect x="439" y="7" width="1" height="2" fill="#e8e8e8"/><rect x="446" y="7" width="1" height="2" fill="#e8e8e8"/><rect x="452" y="7" width="1" height="2" fill="#e8e8e8"/><rect x="458" y="5" width="1" height="6" fill="#e8e8e8"/><rect x="465" y="7" width="1" height="2" fill="#e8e8e8"/><rect x="471" y="7" width="1" height="2" fill="#e8e8e8"/><rect x="477" y="7" width="1" height="2" fill="#e8e8e8"/><rect x="484" y="7" width="1" height="2" fill="#e8e8e8"/><rect x="490" y="7" width="1" height="2" fill="#e8e8e8"/><rect x="496" y="7" width="1" height="2" fill="#e8e8e8"/><rect x="503" y="7" width="1" height="2" fill="#e8e8e8"/><rect x="516" y="7" width="1" height="2" fill="#e8e8e8"/><rect x="522" y="7" width="1" height="2" fill="#e8e8e8"/><rect x="528" y="7" width="1" height="2" fill="#e8e8e8"/><rect x="535" y="7" width="1" height="2" fill="#e8e8e8"/><rect x="541" y="7" width="1" height="2" fill="#e8e8e8"/><rect x="547" y="7" width="1" height="2" fill="#e8e8e8"/><rect x="554" y="7" width="1" height="2" fill="#e8e8e8"/><rect x="560" y="5" width="1" height="6" fill="#e8e8e8"/><rect x="567" y="7" width="1" height="2" fill="#e8e8e8"/><rect x="573" y="7" width="1" height="2" fill="#e8e8e8"/><rect x="579" y="7" width="1" height="2" fill="#e8e8e8"/><rect x="586" y="7" width="1" height="2" fill="#e8e8e8"/><rect x="592" y="7" width="1" height="2" fill="#e8e8e8"/><rect x="598" y="7" width="1" height="2" fill="#e8e8e8"/><rect x="605" y="7" width="1" height="2" fill="#e8e8e8"/><rect x="617" y="7" width="1" height="2" fill="#e8e8e8"/><rect x="624" y="7" width="1" height="2" fill="#e8e8e8"/><rect x="630" y="7" width="1" height="2" fill="#e8e8e8"/><rect x="637" y="7" width="1" height="2" fill="#e8e8e8"/><rect x="643" y="7" width="1" height="2" fill="#e8e8e8"/><rect x="649" y="7" width="1" height="2" fill="#e8e8e8"/><rect x="656" y="7" width="1" height="2" fill="#e8e8e8"/><rect x="662" y="5" width="1" height="6" fill="#e8e8e8"/><rect x="668" y="7" width="1" height="2" fill="#e8e8e8"/><rect x="675" y="7" width="1" height="2" fill="#e8e8e8"/><rect x="681" y="7" width="1" height="2" fill="#e8e8e8"/><rect x="687" y="7" width="1" height="2" fill="#e8e8e8"/><rect x="694" y="7" width="1" height="2" fill="#e8e8e8"/><rect x="700" y="7" width="1" height="2" fill="#e8e8e8"/><rect x="707" y="7" width="1" height="2" fill="#e8e8e8"/><rect x="719" y="7" width="1" height="2" fill="#e8e8e8"/><rect x="726" y="7" width="1" height="2" fill="#e8e8e8"/><rect x="732" y="7" width="1" height="2" fill="#e8e8e8"/><rect x="738" y="7" width="1" height="2" fill="#e8e8e8"/><rect x="745" y="7" width="1" height="2" fill="#e8e8e8"/><rect x="751" y="7" width="1" height="2" fill="#e8e8e8"/><rect x="758" y="7" width="1" height="2" fill="#e8e8e8"/></svg>
<div class="a" style="left:1471px;top:206px;width:1px;height:17px;background:#000"></div>
<div class="a" style="left:372px;top:281px;width:16px;height:1019px;background:#404040"></div>
<div class="t" style="left:370px;top:378.4px;width:20px;text-align:center;font-size:11px;color:#b4b4b4">1</div>
<div class="t" style="left:370px;top:480.4px;width:20px;text-align:center;font-size:11px;color:#b4b4b4">2</div>
<div class="t" style="left:370px;top:582.4px;width:20px;text-align:center;font-size:11px;color:#b4b4b4">3</div>
<div class="t" style="left:370px;top:684.4px;width:20px;text-align:center;font-size:11px;color:#b4b4b4">4</div>
<div class="t" style="left:370px;top:786.4px;width:20px;text-align:center;font-size:11px;color:#b4b4b4">5</div>
<div class="t" style="left:370px;top:888.4px;width:20px;text-align:center;font-size:11px;color:#b4b4b4">6</div>
<div class="t" style="left:370px;top:990.4px;width:20px;text-align:center;font-size:11px;color:#b4b4b4">7</div>
<div class="t" style="left:370px;top:1092.4px;width:20px;text-align:center;font-size:11px;color:#b4b4b4">8</div>
<div class="t" style="left:370px;top:1194.4px;width:20px;text-align:center;font-size:11px;color:#b4b4b4">9</div>
<svg style="left:372px;top:281px" width="16" height="1019"><rect x="7" y="13" width="2" height="1" fill="#e8e8e8"/><rect x="7" y="19" width="2" height="1" fill="#e8e8e8"/><rect x="7" y="25" width="2" height="1" fill="#e8e8e8"/><rect x="7" y="32" width="2" height="1" fill="#e8e8e8"/><rect x="7" y="38" width="2" height="1" fill="#e8e8e8"/><rect x="7" y="45" width="2" height="1" fill="#e8e8e8"/><rect x="5" y="51" width="6" height="1" fill="#e8e8e8"/><rect x="7" y="57" width="2" height="1" fill="#e8e8e8"/><rect x="7" y="64" width="2" height="1" fill="#e8e8e8"/><rect x="7" y="70" width="2" height="1" fill="#e8e8e8"/><rect x="7" y="77" width="2" height="1" fill="#e8e8e8"/><rect x="7" y="83" width="2" height="1" fill="#e8e8e8"/><rect x="7" y="89" width="2" height="1" fill="#e8e8e8"/><rect x="7" y="115" width="2" height="1" fill="#e8e8e8"/><rect x="7" y="121" width="2" height="1" fill="#e8e8e8"/><rect x="7" y="127" width="2" height="1" fill="#e8e8e8"/><rect x="7" y="134" width="2" height="1" fill="#e8e8e8"/><rect x="7" y="140" width="2" height="1" fill="#e8e8e8"/><rect x="7" y="147" width="2" height="1" fill="#e8e8e8"/><rect x="5" y="153" width="6" height="1" fill="#e8e8e8"/><rect x="7" y="159" width="2" height="1" fill="#e8e8e8"/><rect x="7" y="166" width="2" height="1" fill="#e8e8e8"/><rect x="7" y="172" width="2" height="1" fill="#e8e8e8"/><rect x="7" y="179" width="2" height="1" fill="#e8e8e8"/><rect x="7" y="185" width="2" height="1" fill="#e8e8e8"/><rect x="7" y="191" width="2" height="1" fill="#e8e8e8"/><rect x="7" y="217" width="2" height="1" fill="#e8e8e8"/><rect x="7" y="223" width="2" height="1" fill="#e8e8e8"/><rect x="7" y="229" width="2" height="1" fill="#e8e8e8"/><rect x="7" y="236" width="2" height="1" fill="#e8e8e8"/><rect x="7" y="242" width="2" height="1" fill="#e8e8e8"/><rect x="7" y="249" width="2" height="1" fill="#e8e8e8"/><rect x="5" y="255" width="6" height="1" fill="#e8e8e8"/><rect x="7" y="261" width="2" height="1" fill="#e8e8e8"/><rect x="7" y="268" width="2" height="1" fill="#e8e8e8"/><rect x="7" y="274" width="2" height="1" fill="#e8e8e8"/><rect x="7" y="281" width="2" height="1" fill="#e8e8e8"/><rect x="7" y="287" width="2" height="1" fill="#e8e8e8"/><rect x="7" y="293" width="2" height="1" fill="#e8e8e8"/><rect x="7" y="319" width="2" height="1" fill="#e8e8e8"/><rect x="7" y="325" width="2" height="1" fill="#e8e8e8"/><rect x="7" y="331" width="2" height="1" fill="#e8e8e8"/><rect x="7" y="338" width="2" height="1" fill="#e8e8e8"/><rect x="7" y="344" width="2" height="1" fill="#e8e8e8"/><rect x="7" y="351" width="2" height="1" fill="#e8e8e8"/><rect x="5" y="357" width="6" height="1" fill="#e8e8e8"/><rect x="7" y="363" width="2" height="1" fill="#e8e8e8"/><rect x="7" y="370" width="2" height="1" fill="#e8e8e8"/><rect x="7" y="376" width="2" height="1" fill="#e8e8e8"/><rect x="7" y="383" width="2" height="1" fill="#e8e8e8"/><rect x="7" y="389" width="2" height="1" fill="#e8e8e8"/><rect x="7" y="395" width="2" height="1" fill="#e8e8e8"/><rect x="7" y="421" width="2" height="1" fill="#e8e8e8"/><rect x="7" y="427" width="2" height="1" fill="#e8e8e8"/><rect x="7" y="433" width="2" height="1" fill="#e8e8e8"/><rect x="7" y="440" width="2" height="1" fill="#e8e8e8"/><rect x="7" y="446" width="2" height="1" fill="#e8e8e8"/><rect x="7" y="453" width="2" height="1" fill="#e8e8e8"/><rect x="5" y="459" width="6" height="1" fill="#e8e8e8"/><rect x="7" y="465" width="2" height="1" fill="#e8e8e8"/><rect x="7" y="472" width="2" height="1" fill="#e8e8e8"/><rect x="7" y="478" width="2" height="1" fill="#e8e8e8"/><rect x="7" y="485" width="2" height="1" fill="#e8e8e8"/><rect x="7" y="491" width="2" height="1" fill="#e8e8e8"/><rect x="7" y="497" width="2" height="1" fill="#e8e8e8"/><rect x="7" y="523" width="2" height="1" fill="#e8e8e8"/><rect x="7" y="529" width="2" height="1" fill="#e8e8e8"/><rect x="7" y="535" width="2" height="1" fill="#e8e8e8"/><rect x="7" y="542" width="2" height="1" fill="#e8e8e8"/><rect x="7" y="548" width="2" height="1" fill="#e8e8e8"/><rect x="7" y="555" width="2" height="1" fill="#e8e8e8"/><rect x="5" y="561" width="6" height="1" fill="#e8e8e8"/><rect x="7" y="567" width="2" height="1" fill="#e8e8e8"/><rect x="7" y="574" width="2" height="1" fill="#e8e8e8"/><rect x="7" y="580" width="2" height="1" fill="#e8e8e8"/><rect x="7" y="587" width="2" height="1" fill="#e8e8e8"/><rect x="7" y="593" width="2" height="1" fill="#e8e8e8"/><rect x="7" y="599" width="2" height="1" fill="#e8e8e8"/><rect x="7" y="625" width="2" height="1" fill="#e8e8e8"/><rect x="7" y="631" width="2" height="1" fill="#e8e8e8"/><rect x="7" y="637" width="2" height="1" fill="#e8e8e8"/><rect x="7" y="644" width="2" height="1" fill="#e8e8e8"/><rect x="7" y="650" width="2" height="1" fill="#e8e8e8"/><rect x="7" y="657" width="2" height="1" fill="#e8e8e8"/><rect x="5" y="663" width="6" height="1" fill="#e8e8e8"/><rect x="7" y="669" width="2" height="1" fill="#e8e8e8"/><rect x="7" y="676" width="2" height="1" fill="#e8e8e8"/><rect x="7" y="682" width="2" height="1" fill="#e8e8e8"/><rect x="7" y="689" width="2" height="1" fill="#e8e8e8"/><rect x="7" y="695" width="2" height="1" fill="#e8e8e8"/><rect x="7" y="701" width="2" height="1" fill="#e8e8e8"/><rect x="7" y="727" width="2" height="1" fill="#e8e8e8"/><rect x="7" y="733" width="2" height="1" fill="#e8e8e8"/><rect x="7" y="739" width="2" height="1" fill="#e8e8e8"/><rect x="7" y="746" width="2" height="1" fill="#e8e8e8"/><rect x="7" y="752" width="2" height="1" fill="#e8e8e8"/><rect x="7" y="759" width="2" height="1" fill="#e8e8e8"/><rect x="5" y="765" width="6" height="1" fill="#e8e8e8"/><rect x="7" y="771" width="2" height="1" fill="#e8e8e8"/><rect x="7" y="778" width="2" height="1" fill="#e8e8e8"/><rect x="7" y="784" width="2" height="1" fill="#e8e8e8"/><rect x="7" y="791" width="2" height="1" fill="#e8e8e8"/><rect x="7" y="797" width="2" height="1" fill="#e8e8e8"/><rect x="7" y="803" width="2" height="1" fill="#e8e8e8"/><rect x="7" y="829" width="2" height="1" fill="#e8e8e8"/><rect x="7" y="835" width="2" height="1" fill="#e8e8e8"/><rect x="7" y="841" width="2" height="1" fill="#e8e8e8"/><rect x="7" y="848" width="2" height="1" fill="#e8e8e8"/><rect x="7" y="854" width="2" height="1" fill="#e8e8e8"/><rect x="7" y="861" width="2" height="1" fill="#e8e8e8"/><rect x="5" y="867" width="6" height="1" fill="#e8e8e8"/><rect x="7" y="873" width="2" height="1" fill="#e8e8e8"/><rect x="7" y="880" width="2" height="1" fill="#e8e8e8"/><rect x="7" y="886" width="2" height="1" fill="#e8e8e8"/><rect x="7" y="893" width="2" height="1" fill="#e8e8e8"/><rect x="7" y="899" width="2" height="1" fill="#e8e8e8"/><rect x="7" y="905" width="2" height="1" fill="#e8e8e8"/><rect x="7" y="931" width="2" height="1" fill="#e8e8e8"/><rect x="7" y="937" width="2" height="1" fill="#e8e8e8"/><rect x="7" y="943" width="2" height="1" fill="#e8e8e8"/><rect x="7" y="950" width="2" height="1" fill="#e8e8e8"/><rect x="7" y="956" width="2" height="1" fill="#e8e8e8"/><rect x="7" y="963" width="2" height="1" fill="#e8e8e8"/><rect x="5" y="969" width="6" height="1" fill="#e8e8e8"/><rect x="7" y="975" width="2" height="1" fill="#e8e8e8"/><rect x="7" y="982" width="2" height="1" fill="#e8e8e8"/><rect x="7" y="988" width="2" height="1" fill="#e8e8e8"/><rect x="7" y="995" width="2" height="1" fill="#e8e8e8"/><rect x="7" y="1001" width="2" height="1" fill="#e8e8e8"/><rect x="7" y="1007" width="2" height="1" fill="#e8e8e8"/></svg>
<div class="a" style="left:370px;top:942px;width:20px;height:1px;background:#000"></div>
<div class="a" style="left:371px;top:206px;width:18px;height:18px;border:1px solid #606060;background:#424242"></div>
<div class="a" style="left:373px;top:212px;width:14px;height:1.5px;background:#fff"></div><div class="a" style="left:378px;top:208px;width:1.5px;height:14px;background:#fff"></div>
<div class="a" style="left:345.0px;top:205.0px;width:0;height:0;border-left:3.5px solid transparent;border-right:3.5px solid transparent;border-bottom:4px solid #9a9a9a"></div>
<div class="a" style="left:345.0px;top:1341.0px;width:0;height:0;border-left:3.5px solid transparent;border-right:3.5px solid transparent;border-top:4px solid #9a9a9a"></div>
<div class="a" style="left:2521.5px;top:206.0px;width:0;height:0;border-left:3.5px solid transparent;border-right:3.5px solid transparent;border-bottom:4px solid #9a9a9a"></div>
<div class="a" style="left:2521.5px;top:1276.0px;width:0;height:0;border-left:3.5px solid transparent;border-right:3.5px solid transparent;border-top:4px solid #9a9a9a"></div>
<div class="a" style="left:357px;top:763px;width:8px;height:40px;border:1px solid #5e5e5e;border-radius:3px;background:#4a4a4a"></div>
<div class="a" style="left:359.0px;top:780.0px;width:0;height:0;border-top:3.0px solid transparent;border-bottom:3.0px solid transparent;border-right:4px solid #e0e0e0"></div>
<div class="a" style="left:2533px;top:200px;width:9px;height:1166px;background:#4d4d4d"></div>
<!-- ===== BOTTOM ===== -->
<div class="a" style="left:0;top:1350px;width:2542px;height:16px;background:#4e4e4e"></div>
<div class="a" style="left:340px;top:1350px;width:16px;height:16px;background:#444"></div>
<div class="a" style="left:356px;top:1350px;width:8px;height:16px;background:#4a4a4a"></div>
<div class="a" style="left:0;top:1366px;width:2542px;height:1px;background:#444"></div>
<div class="a" style="left:0;top:1367px;width:2542px;height:27px;background:#4d4d4d"></div>
<div class="a" style="left:5.0px;top:1355.0px;width:0;height:0;border-top:4.0px solid transparent;border-bottom:4.0px solid transparent;border-right:4px solid #9a9a9a"></div>
<div class="a" style="left:330.0px;top:1355.0px;width:0;height:0;border-top:4.0px solid transparent;border-bottom:4.0px solid transparent;border-left:4px solid #9a9a9a"></div>
<div class="a" style="left:371.0px;top:1355.0px;width:0;height:0;border-top:4.0px solid transparent;border-bottom:4.0px solid transparent;border-right:4px solid #9a9a9a"></div>
<div class="a" style="left:2506.0px;top:1355.0px;width:0;height:0;border-top:4.0px solid transparent;border-bottom:4.0px solid transparent;border-left:4px solid #9a9a9a"></div>
<div class="a" style="left:2517px;top:1286px;width:16px;height:80px;background:#4e4e4e"></div>
<div class="a" style="left:2517px;top:1286px;width:16px;height:16px;border:1px solid #555"></div>
<div class="a" style="left:2517px;top:1302px;width:16px;height:16px;border:1px solid #555"></div>
<div class="a" style="left:2517px;top:1318px;width:16px;height:16px;border:1px solid #555"></div>
<div class="a" style="left:2517px;top:1334px;width:16px;height:16px;border:1px solid #555"></div>
<div class="a" style="left:2517px;top:1350px;width:16px;height:16px;border:1px solid #555"></div>
<svg style="left:2517px;top:1286px" width="16" height="80"><rect x="4" y="4" width="8" height="1.3" fill="#ddd"/><path d="M4 11L8 6.5L12 11Z" fill="#ddd"/><path d="M4 23L8 18.5L12 23Z" fill="#ddd"/><rect x="4" y="24" width="8" height="1.3" fill="#ddd"/><rect x="3.5" y="37" width="6" height="5" fill="#ddd"/><path d="M6 36V34.5H11V39.5H9.5M8 33V31.5H13V36.5H11.5" stroke="#ddd" fill="none" stroke-width="1"/><rect x="4" y="51" width="8" height="1.3" fill="#ddd"/><path d="M4 53L8 57.5L12 53Z" fill="#ddd"/><path d="M4 66L8 70.5L12 66Z" fill="#ddd"/><rect x="4" y="72" width="8" height="1.3" fill="#ddd"/></svg>
<div class="a" style="left:1151px;top:1371px;width:1px;height:19px;background:#444"></div>
<div class="a" style="left:1267px;top:1371px;width:1px;height:19px;background:#444"></div>
<div class="a" style="left:1457px;top:1371px;width:1px;height:19px;background:#444"></div>
<div class="t" style="left:1156.50px;top:1371.95px;font-size:13px;color:#e0e0e0;font-weight:normal;letter-spacing:0px;">Note 14 of 14</div>
<div class="t" style="left:1272.00px;top:1371.95px;font-size:13px;color:#e0e0e0;font-weight:normal;letter-spacing:0.3px;">Note14</div>
<div class="t" style="left:1472.00px;top:1371.95px;font-size:13px;color:#e0e0e0;font-weight:normal;letter-spacing:0.3px;">Ovr</div>
<svg style="left:1512px;top:1373px" width="20" height="16"><rect x="0.5" y="0.5" width="17" height="13" fill="#fff" stroke="#999"/><rect x="1.5" y="1.5" width="15" height="2.5" fill="#bbb"/><path d="M2.5 6.5H8M2.5 8.5H8M2.5 10.5H8" stroke="#999"/><rect x="10" y="5.5" width="6" height="7" fill="#ccc"/></svg>
<svg style="left:1538px;top:1373px" width="17" height="16"><g fill="#ddd"><rect x="0" y="0" width="6" height="6"/><rect x="9" y="0" width="6" height="6"/><rect x="0" y="9" width="6" height="6"/><rect x="9" y="9" width="6" height="6"/></g><g fill="#4d4d4d"><rect x="1" y="1" width="4" height="1.5"/><rect x="10" y="1" width="4" height="1.5"/><rect x="1" y="10" width="4" height="1.5"/><rect x="10" y="10" width="4" height="1.5"/><rect x="1" y="3.5" width="4" height="1.5"/><rect x="10" y="3.5" width="4" height="1.5"/><rect x="1" y="12.5" width="4" height="1.5"/><rect x="10" y="12.5" width="4" height="1.5"/></g></svg>
<svg style="left:1562px;top:1373px" width="20" height="16"><path d="M0 1H4M1 3.5H4M0 8H4M1 10.5H4M1 13H4" stroke="#ccc"/><rect x="8" y="1" width="10" height="8" fill="#ddd"/><path d="M9.5 3.5H16.5M9.5 6H13" stroke="#666"/></svg>
<div class="a" style="left:1584px;top:1368px;width:24px;height:24px;border:1px solid #777;border-radius:3px"></div>
<svg style="left:1587px;top:1373px" width="20" height="18"><rect x="0.5" y="0.5" width="16" height="12" fill="#fff" stroke="#999"/><rect x="1" y="1" width="15" height="2.5" fill="#bbb"/><path d="M2.5 5.5H9M2.5 8H9M2.5 10.5H6" stroke="#aaa"/><rect x="6.5" y="6.5" width="12" height="10" fill="#fde3ac" stroke="#c98435"/></svg>
<svg style="left:1614px;top:1372px" width="20" height="20"><rect x="0" y="0" width="14" height="2" fill="#aaa"/><rect x="2" y="2" width="10" height="8" fill="#fff"/><rect x="6" y="10" width="2" height="4" fill="#888"/><rect x="3" y="14" width="8" height="2" fill="#ccc"/><path d="M9.5 9.5L16 13.5L9.5 17.5Z" fill="#f0c020"/></svg>
<div class="a" style="left:1635.5px;top:1378.0px;width:0;height:0;border-left:4.0px solid transparent;border-right:4.0px solid transparent;border-top:4px solid #e6e6e6"></div>
<div class="a" style="left:1655px;top:1379px;width:9px;height:1.3px;background:#ddd"></div>
<div class="a" style="left:1669px;top:1378px;width:110px;height:1px;background:#909090"></div>
<div class="a" style="left:1723px;top:1372px;width:1px;height:13px;background:#777"></div>
<div class="a" style="left:1719px;top:1374px;width:9px;height:9px;border-radius:50%;background:#fff"></div>
<div class="a" style="left:1785px;top:1378.5px;width:8px;height:1.3px;background:#ddd"></div><div class="a" style="left:1788.3px;top:1375px;width:1.3px;height:8px;background:#ddd"></div>
<div class="t" style="left:1810.00px;top:1372.95px;font-size:13px;color:#e0e0e0;font-weight:normal;letter-spacing:-0.6px;">106%</div>
<div class="t" style="left:1851.00px;top:1369.65px;font-size:11px;color:#f0f0f0;font-weight:bold;">&raquo;</div>


<!-- ===== DESKTOP EDGES ===== -->
<div class="a" style="left:0;top:0;width:2545px;height:2px;background:linear-gradient(90deg,#3a0f18,#5a2a30 10%,#1a0508 30%,#2a0a10 60%,#120306 80%,#1a0a0a)"></div>
<div class="a" style="left:2542px;top:0;width:3px;height:1395px;background:linear-gradient(180deg,#3a0a10,#8a4a30 30%,#5a2a10 45%,#0a3a45 60%,#1a5a6a 75%,#0a2a30)"></div>
<div class="a" style="left:0;top:1394px;width:2545px;height:1px;background:#0a2a30"></div>
</body></html>
